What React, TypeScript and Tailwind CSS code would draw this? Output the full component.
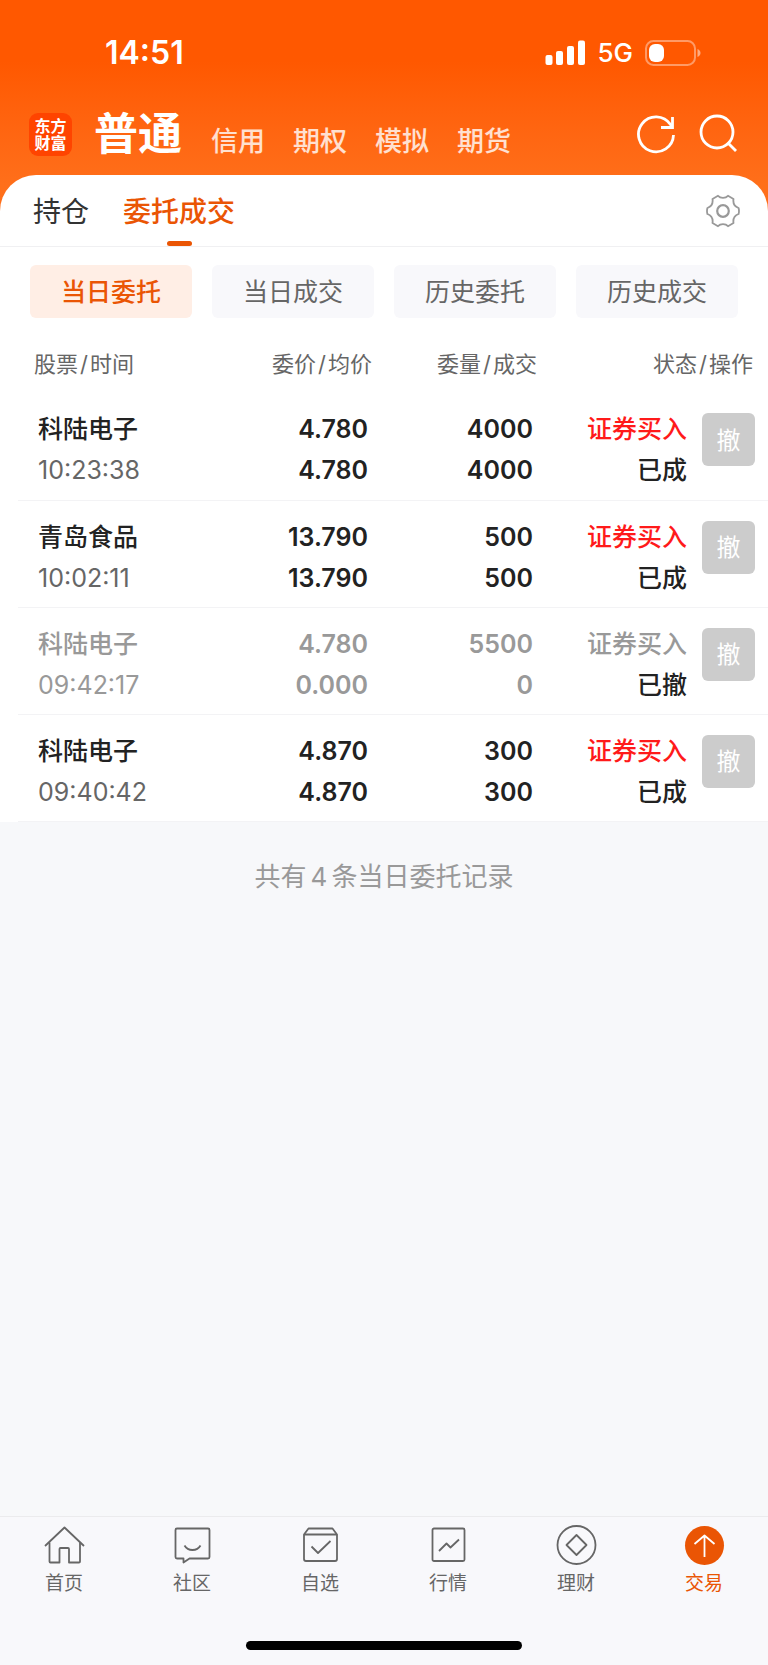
import type { ReactNode } from "react";

type Order = {
  name: string;
  time: string;
  price: string;
  avgPrice: string;
  volume: string;
  filled: string;
  side: string;
  status: string;
  cancelled?: boolean;
};

const orders: Order[] = [
  { name: "科陆电子", time: "10:23:38", price: "4.780", avgPrice: "4.780", volume: "4000", filled: "4000", side: "证券买入", status: "已成" },
  { name: "青岛食品", time: "10:02:11", price: "13.790", avgPrice: "13.790", volume: "500", filled: "500", side: "证券买入", status: "已成" },
  { name: "科陆电子", time: "09:42:17", price: "4.780", avgPrice: "0.000", volume: "5500", filled: "0", side: "证券买入", status: "已撤", cancelled: true },
  { name: "科陆电子", time: "09:40:42", price: "4.870", avgPrice: "4.870", volume: "300", filled: "300", side: "证券买入", status: "已成" },
];

const accounts = ["信用", "期权", "模拟", "期货"];
const filters = ["当日委托", "当日成交", "历史委托", "历史成交"];

const navItems: { label: string; icon: ReactNode; active?: boolean }[] = [
  {
    label: "首页",
    icon: (
      <>
        <path d="M1 20 20.500 1.500 40 20" />
        <path d="M5.500 16.500V35.500a1 1 0 0 0 1 1H15.500V23a1 1 0 0 1 1-1h7.500a1 1 0 0 1 1 1V36.500H35a1 1 0 0 0 1-1V16.500" />
      </>
    ),
  },
  {
    label: "社区",
    icon: (
      <>
        <path d="M5 2.500H36a1.500 1.500 0 0 1 1.500 1.500V31a1.500 1.500 0 0 1-1.500 1.500H17.500L11.500 36.500V32.500H5A1.500 1.500 0 0 1 3.500 31V4A1.500 1.500 0 0 1 5 2.500Z" />
        <path d="M12.500 19.500c3.500 6 12.500 6 16 0" />
      </>
    ),
  },
  {
    label: "自选",
    icon: (
      <>
        <path d="M4 8.500V33a2 2 0 0 0 2 2H35a2 2 0 0 0 2-2V8.500L32.500 2.500H8.500L4 8.500Z" />
        <path d="M4 8.500H37M11.500 20.500 18 27 30.500 15" />
      </>
    ),
  },
  {
    label: "行情",
    icon: (
      <>
        <rect x="4.500" y="2.500" width="32" height="32.500" rx="1.500" />
        <path d="M11 25 18.500 17.500 22.500 21.500 31 13.500" />
      </>
    ),
  },
  {
    label: "理财",
    icon: (
      <>
        <circle cx="20.500" cy="19" r="19" />
        <path d="M20.500 9 30.500 19 20.500 29 10.500 19Z" />
      </>
    ),
  },
  {
    label: "交易",
    active: true,
    icon: (
      <>
        <circle cx="20.500" cy="19.500" r="19.500" fill="#ea5504" stroke="none" />
        <path d="M20.500 31V9.500M10.500 18 20.500 9.500 30.500 18" stroke="#fff" />
      </>
    ),
  },
];

function StatusBar() {
  return (
    <div className="flex h-[105px] items-center justify-between pl-[105px] pr-[67px] text-white">
      <span className="text-[32px] font-semibold leading-8">14:51</span>
      <div className="flex items-center gap-3">
        <svg width="40" height="26" viewBox="0 0 40 26" fill="currentColor" aria-hidden="true">
          <rect x="0.500" y="15" width="7" height="10" rx="2" />
          <rect x="11" y="11" width="7" height="14" rx="2" />
          <rect x="22" y="6" width="7" height="19" rx="2" />
          <rect x="33" y="0.500" width="7" height="24.500" rx="2" />
        </svg>
        <span className="text-[26px] font-medium leading-8">5G</span>
        <svg width="56" height="26" viewBox="0 0 56 26" aria-hidden="true">
          <rect x="1" y="1" width="49" height="24" rx="7.500" fill="none" stroke="#fff" strokeOpacity="0.4" strokeWidth="2" />
          <rect x="4" y="4" width="15" height="18" rx="6" fill="#fff" />
          <path d="M52.500 9c4 1.500 4 6.500 0 8Z" fill="#fff" fillOpacity="0.5" />
        </svg>
      </div>
    </div>
  );
}

function AccountBar() {
  return (
    <header className="flex h-[70px] items-start justify-between pl-[29px] pr-[30px] text-white">
      <div className="flex items-end">
        <div className="mt-2 mr-[22px] flex size-[43px] flex-col items-center justify-center self-start rounded-[9px] bg-[#ff4400] text-base font-bold leading-[17px]">
          <span>东方</span>
          <span>财富</span>
        </div>
        <h1 className="mr-[29px] text-[44px] font-bold leading-[58px]">普通</h1>
        <nav className="flex gap-7">
          {accounts.map((account) => (
            <a key={account} href="#" className="text-[27px] font-medium leading-[42px] text-white/80">
              {account}
            </a>
          ))}
        </nav>
      </div>
      <div className="mt-[9px] flex gap-[22px]">
        <button type="button" aria-label="刷新">
          <svg width="40" height="40" viewBox="0 0 40 40" fill="none" stroke="currentColor" strokeWidth="2.800" aria-hidden="true">
            <path d="M37.500 21A17.500 17.500 0 1 1 34.500 10.500L36 13" />
            <path d="M36.500 3V13.500H25" />
          </svg>
        </button>
        <button type="button" aria-label="搜索">
          <svg width="40" height="40" viewBox="0 0 40 40" fill="none" stroke="currentColor" strokeWidth="2.800" aria-hidden="true">
            <circle cx="19" cy="18" r="16" />
            <path d="M29.500 28.500 38 37" />
          </svg>
        </button>
      </div>
    </header>
  );
}

function SectionTabs() {
  return (
    <div className="flex h-[72px] items-stretch justify-between rounded-t-[36px] border-b border-[#f0f0f2] bg-white pl-[33px] pr-[28px]">
      <nav className="flex gap-[34px] text-[28px]">
        <a href="#" className="leading-[74px] text-[#333333]">
          持仓
        </a>
        <a href="#" aria-current="page" className="relative font-medium leading-[74px] text-[#ea5504]">
          委托成交
          <span className="absolute inset-x-0 bottom-0 mx-auto h-[5px] w-[25px] rounded-sm bg-[#ea5504]" />
        </a>
      </nav>
      <button type="button" aria-label="设置" className="self-center text-[#999999]">
        <svg width="34" height="34" viewBox="0 0 34 34" fill="none" stroke="currentColor" strokeWidth="1.800" strokeLinejoin="round" aria-hidden="true">
          <path d="M12 1.800C14.500 4.600 19.500 4.600 22 1.800L27.500 5C26.800 9.500 28.500 12.500 32.600 14Q33.400 17 32.600 20C28.500 21.500 26.800 24.500 27.500 29L22 32.200C19.500 29.400 14.500 29.400 12 32.200L6.500 29C7.200 24.500 5.500 21.500 1.400 20Q.6 17 1.400 14C5.500 12.500 7.200 9.500 6.500 5Z" />
          <circle cx="17" cy="17" r="5.800" strokeWidth="2.200" />
        </svg>
      </button>
    </div>
  );
}

function ColumnTitle({ top, bottom }: { top: string; bottom: string }) {
  return (
    <>
      {top}
      <span className="mx-0.5">/</span>
      {bottom}
    </>
  );
}

function OrderRow({ order }: { order: Order }) {
  const main = order.cancelled ? "text-[#999999]" : "text-[#222222]";
  const sub = order.cancelled ? "text-[#999999]" : "text-[#666666]";
  const side = order.cancelled ? "text-[#999999]" : "text-[#ff1a1a]";

  return (
    <tr className="h-[107px] border-b border-[#f3f3f5] align-top text-[25px] leading-[41px]">
      <td className="pl-5 pt-4">
        <p className={`font-medium ${main}`}>{order.name}</p>
        <p className={sub}>{order.time}</p>
      </td>
      <td className={`pr-1 pt-4 text-right font-semibold ${main}`}>
        <p>{order.price}</p>
        <p>{order.avgPrice}</p>
      </td>
      <td className={`pr-1 pt-4 text-right font-semibold ${main}`}>
        <p>{order.volume}</p>
        <p>{order.filled}</p>
      </td>
      <td className="pt-4 text-right font-medium">
        <p className={side}>{order.side}</p>
        <p className="text-[#222222]">{order.status}</p>
      </td>
      <td className="pl-[15px] pt-5">
        <button type="button" className="block size-[53px] rounded-md bg-[#cccccc] pt-0.5 text-2xl text-white">
          撤
        </button>
      </td>
    </tr>
  );
}

function TabBar() {
  return (
    <footer className="border-t border-[#ebebed] bg-[#f8f8fb]">
      <nav className="grid grid-cols-6 pt-[9px]">
        {navItems.map((item) => (
          <a
            key={item.label}
            href="#"
            className={`flex flex-col items-center gap-1 text-[19px] leading-[30px] ${item.active ? "text-[#ea5504]" : "text-[#666666]"}`}
          >
            <svg width="41" height="39" viewBox="0 0 41 39" fill="none" stroke="currentColor" strokeWidth="1.800" strokeLinejoin="round" className="overflow-visible" aria-hidden="true">
              {item.icon}
            </svg>
            {item.label}
          </a>
        ))}
      </nav>
      <div className="mx-auto mb-[15px] mt-[42px] h-[9px] w-[36%] rounded-full bg-black" />
    </footer>
  );
}

export default function App() {
  return (
    <div className="flex min-h-screen flex-col bg-[#f7f8fa] font-['Inter','Noto_Sans_CJK_SC',sans-serif]">
      <div className="bg-linear-to-b from-[#ff5800] from-25% to-[#ff6f1a] to-75%">
        <StatusBar />
        <AccountBar />
        <SectionTabs />
      </div>

      <main className="flex-1">
        <section className="bg-white">
          <div className="grid grid-cols-4 gap-5 px-[30px] pt-[18px]">
            {filters.map((filter, i) => (
              <button
                key={filter}
                type="button"
                className={`h-[53px] rounded-md pt-0.5 text-[25px] ${i === 0 ? "bg-[#ffeee5] font-medium text-[#ea5504]" : "bg-[#f8f8fb] text-[#666666]"}`}
              >
                {filter}
              </button>
            ))}
          </div>

          <div className="pl-[18px] pt-[18px]">
            <table className="w-full table-fixed border-collapse">
              <colgroup>
                <col />
                <col className="w-[24%]" />
                <col className="w-[22%]" />
                <col className="w-[20%]" />
                <col className="w-[81px]" />
              </colgroup>
              <thead className="text-[22px] text-[#666666]">
                <tr className="h-[57px] align-middle">
                  <th className="pl-4 text-left font-normal">
                    <ColumnTitle top="股票" bottom="时间" />
                  </th>
                  <th className="text-right font-normal">
                    <ColumnTitle top="委价" bottom="均价" />
                  </th>
                  <th className="text-right font-normal">
                    <ColumnTitle top="委量" bottom="成交" />
                  </th>
                  <th colSpan={2} className="pr-[15px] text-right font-normal">
                    <ColumnTitle top="状态" bottom="操作" />
                  </th>
                </tr>
              </thead>
              <tbody>
                {orders.map((order) => (
                  <OrderRow key={order.time} order={order} />
                ))}
              </tbody>
            </table>
          </div>
        </section>
        <p className="pt-9 text-center text-[26px] leading-[38px] text-[#999999]">
          共有<span className="mx-1">4</span>条当日委托记录
        </p>
      </main>

      <TabBar />
    </div>
  );
}
